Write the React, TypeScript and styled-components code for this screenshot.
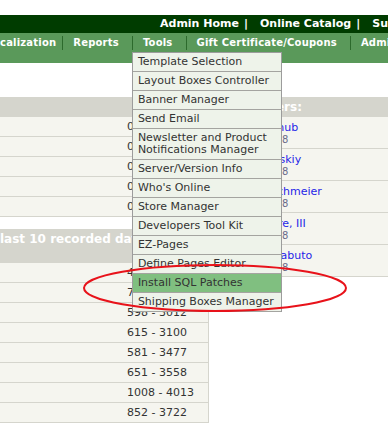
import styled, { createGlobalStyle } from "styled-components";

const GlobalStyle = createGlobalStyle`
  html, body {
    margin: 0;
    padding: 0;
    background: #ffffff;
  }
  body {
    font-family: "DejaVu Sans", Verdana, sans-serif;
  }
`;

const Page = styled.div`
  position: relative;
  width: 388px;
  height: 426px;
  overflow: hidden;
  background: #ffffff;
`;

const LogoSpace = styled.div`
  height: 15px;
`;

const TopBar = styled.div`
  height: 18px;
  line-height: 18px;
  background: #003c00;
  color: #ffffff;
  font-size: 11px;
  font-weight: bold;
  white-space: nowrap;
  padding-left: 160px;
`;

const TopLink = styled.span`
  color: #ffffff;
`;

const TopSep = styled.span`
  margin: 0 12px 0 5px;
`;

const NavBar = styled.div`
  height: 30px;
  background: #5a995a;
`;

const NavRow = styled.div`
  display: flex;
  align-items: center;
  height: 19px;
  white-space: nowrap;
`;

const NavItem = styled.div<{ $first?: boolean }>`
  position: relative;
  padding: 0 ${(p) => (p.$first ? "6px" : "13px")} 0 ${(p) => (p.$first ? "0" : "10px")};
  border-left: ${(p) => (p.$first ? "none" : "1px solid #2c6a2c")};
  line-height: 14px;
  font-size: 10px;
  font-weight: bold;
  letter-spacing: 0.2px;
  color: #ffffff;
`;

const Menu = styled.div`
  position: absolute;
  top: 16px;
  left: -1px;
  z-index: 10;
  width: 150px;
  box-sizing: border-box;
  background: #eef3ea;
  border: 1px solid #9c9c9c;
  border-bottom: none;
  letter-spacing: 0;
`;

const MenuItem = styled.div<{ $active?: boolean }>`
  padding: 3px 5px;
  line-height: 12px;
  font-size: 11px;
  font-weight: normal;
  color: #333333;
  white-space: normal;
  background: ${(p) => (p.$active ? "#80bf80" : "transparent")};
  border-bottom: 1px solid #a4a4a0;
`;

const Content = styled.div`
  display: flex;
  gap: 4px;
  padding-top: 34px;
`;

const LeftCol = styled.div`
  width: 209px;
  flex: none;
  display: flex;
  flex-direction: column;
  gap: 12px;
`;

const RightCol = styled.div`
  flex: 1;
`;

const Box = styled.div<{ $edge?: boolean }>`
  border-right: ${(p) => (p.$edge ? "1px solid #d5d5cd" : "none")};
`;

const BoxHeader = styled.div<{ $tall?: boolean; $pad?: number }>`
  height: ${(p) => (p.$tall ? "34px" : "20px")};
  box-sizing: border-box;
  padding: ${(p) => (p.$tall ? "3px" : "0")} 0 0 ${(p) => p.$pad ?? 0}px;
  line-height: ${(p) => (p.$tall ? "15px" : "20px")};
  background: #d5d5cd;
  color: #ffffff;
  font-size: 12px;
  font-weight: bold;
  white-space: nowrap;
  overflow: hidden;
`;

const StatRow = styled.div`
  height: 19px;
  line-height: 19px;
  padding-left: 127px;
  background: #f5f5ef;
  border-bottom: 1px solid #d5d5cd;
  font-size: 11px;
  color: #333333;
  white-space: nowrap;
`;

const CustomerRow = styled.div`
  height: 32px;
  box-sizing: border-box;
  padding: 4px 0 0 2px;
  background: #f5f5ef;
  border-bottom: 1px solid #d5d5cd;
  white-space: nowrap;
  overflow: hidden;
`;

const CustomerName = styled.a`
  display: block;
  line-height: 13px;
  font-size: 11px;
  color: #1f1fe8;
  text-decoration: none;
`;

const CustomerDate = styled.div`
  line-height: 12px;
  font-size: 10px;
  color: #6a6a8a;
`;

const Annotation = styled.svg`
  position: absolute;
  left: 0;
  top: 0;
  z-index: 20;
  pointer-events: none;
`;

const toolsMenu = [
  "Template Selection",
  "Layout Boxes Controller",
  "Banner Manager",
  "Send Email",
  "Newsletter and Product Notifications Manager",
  "Server/Version Info",
  "Who's Online",
  "Store Manager",
  "Developers Tool Kit",
  "EZ-Pages",
  "Define Pages Editor",
  "Install SQL Patches",
  "Shipping Boxes Manager",
];

const stats = ["0", "0", "0", "0", "0"];

const history = [
  "485 - 2987",
  "712 - 3310",
  "598 - 3012",
  "615 - 3100",
  "581 - 3477",
  "651 - 3558",
  "1008 - 4013",
  "852 - 3722",
];

const customers = [
  { name: "Heinrich Schub", date: "on 05/12/2008" },
  { name: "Pavel Zarovskiy", date: "on 05/11/2008" },
  { name: "Wolfgang Schmeier", date: "on 05/10/2008" },
  { name: "Robert Moore, III", date: "on 05/09/2008" },
  { name: "Francesca Sabuto", date: "on 05/08/2008" },
];

export default function App() {
  return (
    <Page>
      <GlobalStyle />
      <LogoSpace />
      <TopBar>
        <TopLink>Admin Home</TopLink>
        <TopSep>|</TopSep>
        <TopLink>Online Catalog</TopLink>
        <TopSep>|</TopSep>
        <TopLink>Support Site</TopLink>
      </TopBar>
      <NavBar>
        <NavRow>
          <NavItem $first>calization</NavItem>
          <NavItem>Reports</NavItem>
          <NavItem>
            Tools
            <Menu>
              {toolsMenu.map((item) => (
                <MenuItem key={item} $active={item === "Install SQL Patches"}>
                  {item}
                </MenuItem>
              ))}
            </Menu>
          </NavItem>
          <NavItem>Gift Certificate/Coupons</NavItem>
          <NavItem>Administration</NavItem>
        </NavRow>
      </NavBar>
      <Content>
        <LeftCol>
          <Box $edge>
            <BoxHeader />
            {stats.map((v, i) => (
              <StatRow key={i}>{v}</StatRow>
            ))}
          </Box>
          <Box $edge>
            <BoxHeader $tall>last 10 recorded days</BoxHeader>
            {history.map((v) => (
              <StatRow key={v}>{v}</StatRow>
            ))}
          </Box>
        </LeftCol>
        <RightCol>
          <Box>
            <BoxHeader $pad={12}>Customers:</BoxHeader>
            {customers.map((c) => (
              <CustomerRow key={c.name}>
                <CustomerName href="#">{c.name}</CustomerName>
                <CustomerDate>{c.date}</CustomerDate>
              </CustomerRow>
            ))}
          </Box>
        </RightCol>
      </Content>
      <Annotation width="388" height="426" viewBox="0 0 388 426">
        <ellipse
          cx="215"
          cy="288"
          rx="131"
          ry="23"
          fill="none"
          stroke="#e8121a"
          strokeWidth="2"
        />
      </Annotation>
    </Page>
  );
}
